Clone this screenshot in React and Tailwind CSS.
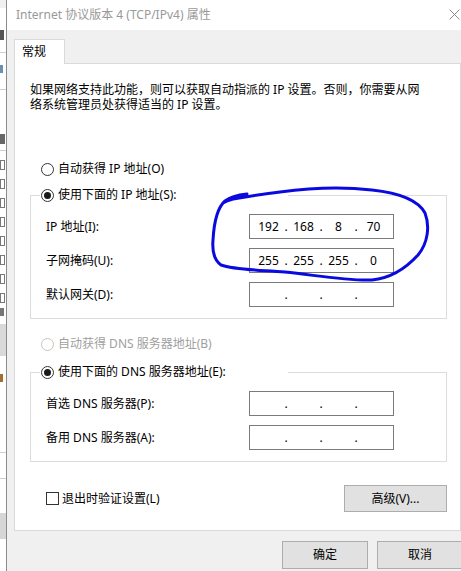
const FONT = '"Noto Sans", "Noto Sans CJK SC", sans-serif';

const Radio = ({ checked, disabled }) => (
  <span
    className={`flex h-[13px] w-[13px] shrink-0 items-center justify-center rounded-full border bg-white ${
      disabled ? 'border-[#c4c4c4]' : 'border-[#333333]'
    }`}
  >
    {checked && <span className="h-[7px] w-[7px] rounded-full bg-[#1a1a1a]" />}
  </span>
);

const IpBox = ({ parts }) => (
  <div className="flex h-[25px] w-[145px] items-center border border-[#7a7a7a] bg-white pl-[3px] text-[12px] text-black">
    {[0, 1, 2, 3].map((i) => (
      <div key={i} className="flex items-center">
        {i > 0 && <span className="w-[4px] text-center">.</span>}
        <span className="w-[31px] text-center">{parts ? parts[i] : ''}</span>
      </div>
    ))}
  </div>
);

const FieldRow = ({ label, parts }) => (
  <div className="flex items-center">
    <span className="w-[218px] pl-[15px]">{label}</span>
    <IpBox parts={parts} />
  </div>
);

const GroupBox = ({ legend, children }) => (
  <fieldset className="ml-[15px] w-[417px] border border-[#dcdcdc] px-0 pb-[11px]">
    <legend className="ml-[9px] flex h-[20px] w-[248px] items-center gap-[4px] bg-white pl-[1px]">
      <Radio checked />
      <span>{legend}</span>
    </legend>
    <div className="mt-[9px] flex flex-col gap-[9px]">{children}</div>
  </fieldset>
);

const Button = ({ children, className }) => (
  <button className={`flex shrink-0 items-center justify-center border border-[#adadad] bg-[#e1e1e1] text-[12px] text-black ${className}`}>
    {children}
  </button>
);

const BackStrip = () => (
  <div className="flex w-[6px] shrink-0 flex-col bg-white text-[12px] leading-none text-black">
    <div className="h-[8px] overflow-hidden bg-[#f0f0f0]" />
    <div className="mt-[22px] h-[10px] w-[4px] bg-[#555]" />
    <div className="mt-[12px] h-px bg-[#cfcfcf]" />
    <div className="mt-[12px] h-[8px] w-[3px] bg-[#6a8fb0]" />
    <div className="mt-[16px] h-px bg-[#cfcfcf]" />
    <div className="mt-[44px] h-[10px] w-[5px] bg-[#666]" />
    <div className="mt-[6px] h-px bg-[#cfcfcf]" />
    {[0, 1, 2, 3, 4, 5, 6, 7].map((i) => (
      <div key={i} className="mt-[9px] h-[10px] w-[5px] border border-[#777] bg-white" />
    ))}
    <div className="mt-[5px] h-[8px] w-[4px] bg-[#777]" />
    <div className="mt-[8px] h-[32px] bg-[#d9d9d9]" />
    <div className="mt-[18px] h-[8px] w-[3px] bg-[#a07030]" />
    <div className="mt-[70px] h-px bg-[#cfcfcf]" />
    <div className="mt-[25px] h-px bg-[#cfcfcf]" />
    <div className="mt-[34px] h-[26px] bg-[#d6d6d6]" />
  </div>
);

export default function App() {
  return (
    <div
      className="relative flex h-[571px] w-[461px] overflow-hidden bg-white text-[12px] text-black"
      style={{ fontFamily: FONT }}
    >
      <BackStrip />
      <div className="w-px shrink-0 bg-[#8c8c8c]" />

      <div className="flex w-[461px] shrink-0 flex-col bg-[#f0f0f0]">
        {/* title bar */}
        <div className="flex h-[30px] items-center justify-between bg-white pl-[9px] pr-[8px]">
          <span className="text-[12px] text-[#999999]">Internet 协议版本 4 (TCP/IPv4) 属性</span>
          <svg width="11" height="11" viewBox="0 0 11 11" className="mb-[2px]">
            <path d="M0.5 0.5 L10.5 10.5 M10.5 0.5 L0.5 10.5" stroke="#8a8a8a" strokeWidth="1" />
          </svg>
        </div>

        <div className="flex flex-col px-[7px] pt-[9px]">
          {/* tab */}
          <div className="relative z-10 -mb-px flex h-[25px] w-[51px] items-center border border-b-0 border-[#d9d9d9] bg-white pl-[7px]">
            常规
          </div>

          {/* panel */}
          <div className="flex h-[468px] flex-col border border-[#d9d9d9] bg-white">
            <div className="mt-[18px] pl-[15px] leading-[15px]">
              <p>如果网络支持此功能，则可以获取自动指派的 IP 设置。否则，你需要从网</p>
              <p>络系统管理员处获得适当的 IP 设置。</p>
            </div>

            <div className="ml-[26px] mt-[47px] flex h-[20px] items-center gap-[4px]">
              <Radio />
              <span>自动获得 IP 地址(O)</span>
            </div>

            <div className="mt-[6px]">
              <GroupBox legend="使用下面的 IP 地址(S):">
                <FieldRow label="IP 地址(I):" parts={['192', '168', '8', '70']} />
                <FieldRow label="子网掩码(U):" parts={['255', '255', '255', '0']} />
                <FieldRow label="默认网关(D):" />
              </GroupBox>
            </div>

            <div className="ml-[26px] mt-[15px] flex h-[20px] items-center gap-[4px] text-[#a0a0a0]">
              <Radio disabled />
              <span>自动获得 DNS 服务器地址(B)</span>
            </div>

            <div className="mt-[8px]">
              <GroupBox legend="使用下面的 DNS 服务器地址(E):">
                <FieldRow label="首选 DNS 服务器(P):" />
                <FieldRow label="备用 DNS 服务器(A):" />
              </GroupBox>
            </div>

            <div className="mt-[23px] flex items-center justify-between pl-[31px] pr-[13px]">
              <label className="flex items-center gap-[3px]">
                <span className="h-[13px] w-[13px] border border-[#333333] bg-white" />
                <span>退出时验证设置(L)</span>
              </label>
              <Button className="h-[27px] w-[103px]">高级(V)...</Button>
            </div>
          </div>

          {/* dialog buttons */}
          <div className="-mr-[2px] mt-[10px] flex justify-end gap-[9px]">
            <Button className="h-[28px] w-[86px]">确定</Button>
            <Button className="h-[28px] w-[86px]">取消</Button>
          </div>
        </div>
      </div>

      {/* hand-drawn annotation */}
      <svg className="pointer-events-none absolute left-0 top-0" width="461" height="571">
        <path
          d="M247 194 C238 195, 230 197, 225 201 C217 208, 214 222, 213 240 C212 252, 214 260, 221 265 C235 270, 260 270, 285 272 C315 275, 345 281, 372 280 C392 278, 408 266, 418 255 C428 243, 430 226, 425 213 C418 200, 400 193, 372 190 C345 187, 310 188, 280 192 C262 194, 245 197, 233 199 C229 200, 226 201, 223 203"
          fill="none"
          stroke="#0a0ae0"
          strokeWidth="3"
          strokeLinecap="round"
        />
      </svg>
    </div>
  );
}
